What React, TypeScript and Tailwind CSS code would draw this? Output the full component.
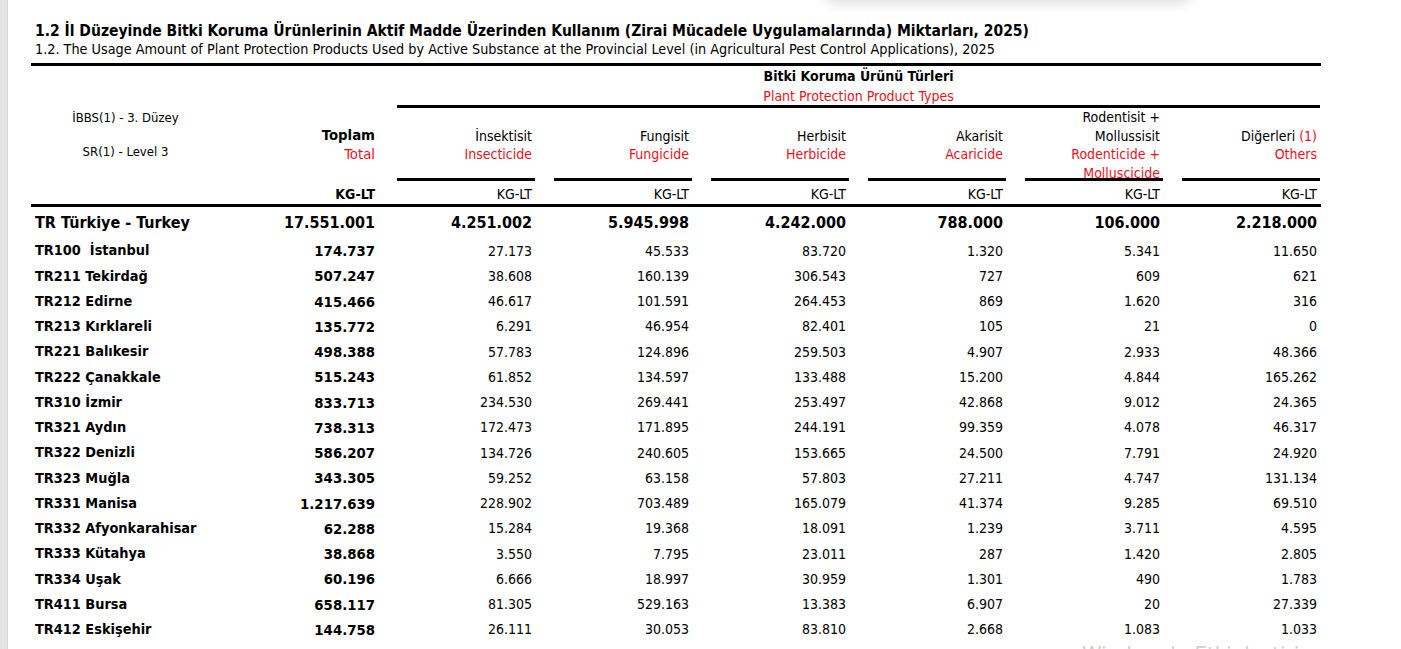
import React from "react";

// Rows of the provincial table: label, total, then the six product types
const ROWS: [string, string[]][] = [
  ["TR100  İstanbul", ["174.737", "27.173", "45.533", "83.720", "1.320", "5.341", "11.650"]],
  ["TR211 Tekirdağ", ["507.247", "38.608", "160.139", "306.543", "727", "609", "621"]],
  ["TR212 Edirne", ["415.466", "46.617", "101.591", "264.453", "869", "1.620", "316"]],
  ["TR213 Kırklareli", ["135.772", "6.291", "46.954", "82.401", "105", "21", "0"]],
  ["TR221 Balıkesir", ["498.388", "57.783", "124.896", "259.503", "4.907", "2.933", "48.366"]],
  ["TR222 Çanakkale", ["515.243", "61.852", "134.597", "133.488", "15.200", "4.844", "165.262"]],
  ["TR310 İzmir", ["833.713", "234.530", "269.441", "253.497", "42.868", "9.012", "24.365"]],
  ["TR321 Aydın", ["738.313", "172.473", "171.895", "244.191", "99.359", "4.078", "46.317"]],
  ["TR322 Denizli", ["586.207", "134.726", "240.605", "153.665", "24.500", "7.791", "24.920"]],
  ["TR323 Muğla", ["343.305", "59.252", "63.158", "57.803", "27.211", "4.747", "131.134"]],
  ["TR331 Manisa", ["1.217.639", "228.902", "703.489", "165.079", "41.374", "9.285", "69.510"]],
  ["TR332 Afyonkarahisar", ["62.288", "15.284", "19.368", "18.091", "1.239", "3.711", "4.595"]],
  ["TR333 Kütahya", ["38.868", "3.550", "7.795", "23.011", "287", "1.420", "2.805"]],
  ["TR334 Uşak", ["60.196", "6.666", "18.997", "30.959", "1.301", "490", "1.783"]],
  ["TR411 Bursa", ["658.117", "81.305", "529.163", "13.383", "6.907", "20", "27.339"]],
  ["TR412 Eskişehir", ["144.758", "26.111", "30.053", "83.810", "2.668", "1.083", "1.033"]],
];

const TURKEY = ["17.551.001", "4.251.002", "5.945.998", "4.242.000", "788.000", "106.000", "2.218.000"];

const COLS = "grid grid-cols-[189px_158px_157px_157px_157px_157px_157px_157px]";

function TypeHeader({ lines }: { lines: [string, boolean][] }) {
  return (
    <div className="row-start-2 ml-[19px] flex h-full flex-col justify-center border-b-[3px] border-black pr-[3px] pt-[4px] text-right leading-[18.5px]">
      {lines.map(([t, red]) => (
        <div key={t} className={red ? "text-[#e8111b]" : ""}>{t}</div>
      ))}
    </div>
  );
}

export default function App() {
  return (
    <div className="relative h-[649px] w-[1401px] overflow-hidden bg-white font-['DejaVu_Sans',sans-serif] font-stretch-condensed text-black">
      {/* gray window edge on the left */}
      <div className="absolute left-0 top-0 h-full w-[8px] border-r border-[#d4d4d4] bg-[#e4e4e4]" />
      {/* popup shadow peeking in from above */}
      <div className="absolute left-[822px] top-[-46px] h-[46px] w-[372px] rounded-2xl bg-white shadow-[0_4px_12px_rgba(0,0,0,0.12)]" />

      <div className="pl-[31px] pt-[21px]">
        <div className="pl-[4px] text-[15.5px] font-bold leading-[20px]">
          1.2 İl Düzeyinde Bitki Koruma Ürünlerinin Aktif Madde Üzerinden Kullanım (Zirai Mücadele Uygulamalarında) Miktarları, 2025)
        </div>
        <div className="pl-[4px] text-[14.3px] leading-[17px]">
          1.2. The Usage Amount of Plant Protection Products Used by Active Substance at the Provincial Level (in Agricultural Pest Control Applications), 2025
        </div>

        <div className="mt-[5px] w-[1290px] border-t-[3px] border-black text-[14px]">
          {/* header */}
          <div className={`${COLS} grid-rows-[42px_73px_23px] border-b-[3px] border-black`}>
            <div className="col-start-1 row-span-3 row-start-1 flex flex-col items-center pt-[43px] text-[13px] leading-[18px]">
              <div>İBBS(1) - 3. Düzey</div>
              <div className="mt-[16px]">SR(1) - Level 3</div>
            </div>
            <div className="col-start-2 row-start-2 flex flex-col justify-center pr-[3px] text-right text-[14.8px] leading-[18.5px]">
              <div className="font-bold">Toplam</div>
              <div className="text-[#e8111b]">Total</div>
            </div>
            <div className="col-span-6 col-start-3 row-start-1 ml-[19px] flex flex-col items-center justify-center border-b-[3px] border-black leading-[20px]">
              <div className="font-bold">Bitki Koruma Ürünü Türleri</div>
              <div className="text-[#e8111b]">Plant Protection Product Types</div>
            </div>
            <TypeHeader lines={[["İnsektisit", false], ["Insecticide", true]]} />
            <TypeHeader lines={[["Fungisit", false], ["Fungicide", true]]} />
            <TypeHeader lines={[["Herbisit", false], ["Herbicide", true]]} />
            <TypeHeader lines={[["Akarisit", false], ["Acaricide", true]]} />
            <TypeHeader
              lines={[
                ["Rodentisit +", false],
                ["Mollussisit", false],
                ["Rodenticide +", true],
                ["Molluscicide", true],
              ]}
            />
            <div className="row-start-2 ml-[19px] flex h-full flex-col justify-center border-b-[3px] border-black pr-[3px] pt-[4px] text-right leading-[18.5px]">
              <div>
                Diğerleri <span className="text-[#e8111b]">(1)</span>
              </div>
              <div className="text-[#e8111b]">Others</div>
            </div>
            <div className="col-start-2 row-start-3 flex items-center justify-end pr-[3px] pt-[3px] font-bold">KG-LT</div>
            {Array.from({ length: 6 }).map((_, i) => (
              <div key={i} className="row-start-3 flex items-center justify-end pr-[3px] pt-[3px]">KG-LT</div>
            ))}
          </div>

          {/* Turkey total row */}
          <div className={`${COLS} h-[31px] items-center text-[16px] font-bold`}>
            <div className="pl-[4px]">TR Türkiye - Turkey</div>
            {TURKEY.map((v, i) => (
              <div key={i} className="pr-[3px] text-right">{v}</div>
            ))}
          </div>

          {ROWS.map(([label, vals]) => (
            <div key={label} className={`${COLS} h-[25.25px] items-center pt-[1px]`}>
              <div className="whitespace-pre pl-[4px] text-[14.4px] font-bold">{label}</div>
              {vals.map((v, i) => (
                <div key={i} className={`pr-[3px] text-right ${i === 0 ? "text-[14.8px] font-bold" : ""}`}>{v}</div>
              ))}
            </div>
          ))}
        </div>
      </div>

      {/* activation watermark cut off by the bottom edge */}
      <div className="absolute left-[1082px] top-[638px] text-[22px] text-[#d0d0d0]">Windows'u Etkinleştirin</div>
    </div>
  );
}
